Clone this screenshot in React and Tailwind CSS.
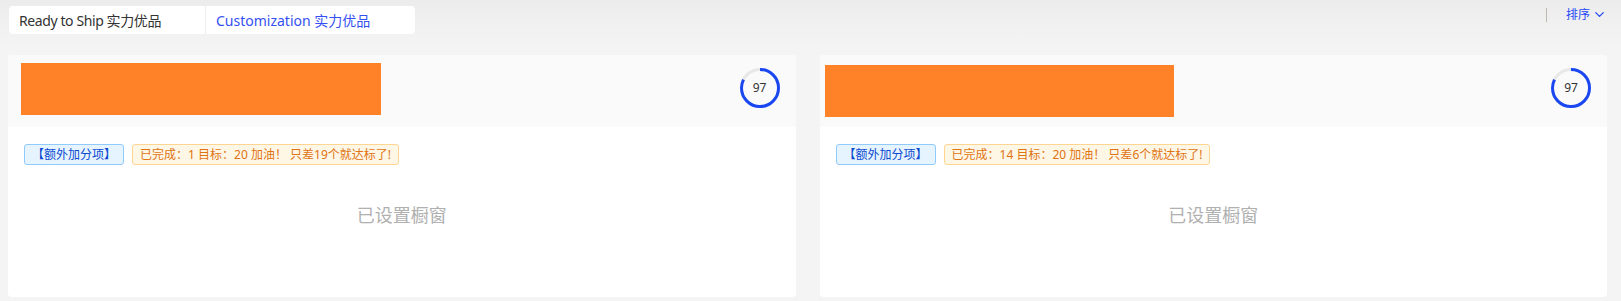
import { FiChevronDown } from 'react-icons/fi';

const cards = [
  { done: 1, target: 20, bannerW: 360, bannerTop: 'mt-[8px]', padL: 'pl-[13px]' },
  { done: 14, target: 20, bannerW: 349, bannerTop: 'mt-[10px]', padL: 'pl-[5px]' },
];

// small progress ring shown at the top right of each card
const ScoreRing = ({ score, ratio }) => {
  const r = 18.5;
  const c = 2 * Math.PI * r;
  return (
    <div className="relative w-[40px] h-[40px] mb-[6px]">
      <svg width="40" height="40" viewBox="0 0 40 40" className="-rotate-90">
        <circle cx="20" cy="20" r={r} fill="none" stroke="#e8e8e8" strokeWidth="3" />
        <circle
          cx="20"
          cy="20"
          r={r}
          fill="none"
          stroke="#1a47f2"
          strokeWidth="3"
          strokeDasharray={`${c * ratio} ${c}`}
        />
      </svg>
      <span className="absolute inset-0 flex items-center justify-center text-[12px] text-[#333]">{score}</span>
    </div>
  );
};

const Card = ({ card }) => (
  <div className="bg-white rounded-[4px] overflow-hidden">
    {/* header */}
    <div className={`bg-[#fafafa] h-[72px] flex items-start justify-between ${card.padL} pr-[16px]`}>
      <div className={`${card.bannerTop} h-[52px] bg-[#ff8228]`} style={{ width: card.bannerW }} />
      <div className="h-full flex items-center">
        <ScoreRing score={97} ratio={0.82} />
      </div>
    </div>

    {/* body */}
    <div className="h-[170px] px-4 pt-[17px]">
      <div className="flex gap-2">
        <span className="h-[21px] px-[7px] flex items-center text-[12px] rounded-[3px] border border-[#91caff] bg-[#e6f4ff] text-[#0b49d0]">
          【额外加分项】
        </span>
        <span className="h-[21px] px-[7px] flex items-center text-[12px] rounded-[3px] border border-[#ffd591] bg-[#fff7e6] text-[#e07312]">
          已完成：{card.done} 目标：{card.target} 加油！ 只差{card.target - card.done}个就达标了!
        </span>
      </div>
      <div className="h-[100px] flex items-center justify-center text-[18px] text-[#b0b0b0]">已设置橱窗</div>
    </div>
  </div>
);

export default function App() {
  return (
    <div
      className="w-[1621px] h-[301px] bg-[#f4f4f4] overflow-hidden"
      style={{ fontFamily: '"Noto Sans", "Noto Sans CJK SC", sans-serif' }}
    >
      {/* top bar */}
      <div className="h-[45px] bg-gradient-to-b from-[#ececec] to-[#f4f4f4] flex items-start justify-between pl-[9px] pr-[14px]">
        <div className="mt-[6px] h-[28px] flex bg-white rounded-[4px]">
          <div className="w-[197px] pl-[10px] flex items-center text-[14px] tracking-[-0.4px] text-[#333] border-r border-[#eeeeee]">Ready to Ship 实力优品</div>
          <div className="w-[209px] pl-[10px] flex items-center text-[14px] text-[#3450f2]">Customization 实力优品</div>
        </div>
        <div className="mt-[7px] flex items-center h-[15px]">
          <div className="w-px h-[14px] bg-[#bdb8b0] mr-[19px]" />
          <span className="text-[12px] text-[#2447f5]">排序</span>
          <FiChevronDown className="ml-[2px] text-[#2447f5] w-[15px] h-[15px]" />
        </div>
      </div>

      {/* cards */}
      <div className="grid grid-cols-2 gap-6 pl-2 pr-[14px] mt-[10px]">
        {cards.map((card, i) => (
          <Card key={i} card={card} />
        ))}
      </div>
    </div>
  );
}
